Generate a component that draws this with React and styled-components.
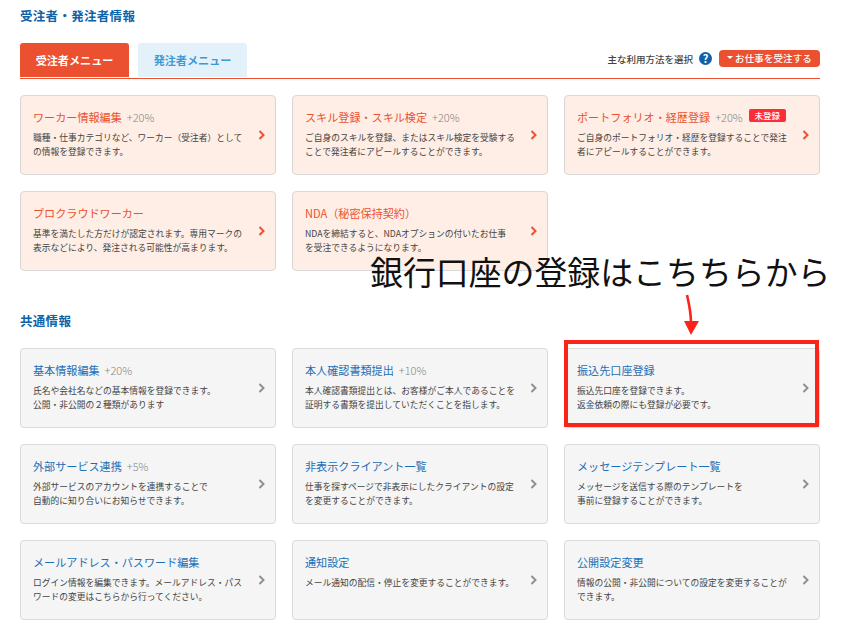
import React from 'react';
import styled, { createGlobalStyle } from 'styled-components';

const GlobalStyle = createGlobalStyle`
  html, body {
    margin: 0;
    padding: 0;
    background: #fff;
    font-family: "Noto Sans CJK JP", "Liberation Sans", sans-serif;
  }
`;

const Page = styled.div`
  position: relative;
  width: 844px;
  height: 641px;
  padding: 7px 24px 0 20px;
  box-sizing: border-box;
  overflow: hidden;
`;

const SectionTitle = styled.h2`
  margin: ${p => p.$top || 0}px 0 0;
  height: 18px;
  font-size: 12.5px;
  line-height: 18px;
  font-weight: 700;
  color: #0f62a8;
  letter-spacing: 0.3px;
`;

const TabBar = styled.div`
  display: flex;
  align-items: flex-start;
  height: 35px;
  margin-top: 18px;
  border-bottom: 1px solid #eb5130;
`;

const Tab = styled.div`
  display: flex;
  align-items: center;
  justify-content: center;
  width: 109px;
  height: 34px;
  margin-right: 9px;
  padding-bottom: 1px;
  box-sizing: border-box;
  border-radius: 3px 3px 0 0;
  font-size: 11.1px;
  font-weight: 700;
  background: ${p => (p.$active ? '#eb5130' : '#e3f1fa')};
  color: ${p => (p.$active ? '#fff' : '#3b9ad6')};
`;

const Chooser = styled.div`
  display: flex;
  align-items: center;
  margin-left: auto;
  height: 34px;
  padding-bottom: 3px;
  box-sizing: border-box;
`;

const ChooserLabel = styled.span`
  font-size: 9.5px;
  font-weight: 500;
  color: #444;
`;

const HelpIcon = styled.span`
  display: flex;
  align-items: center;
  justify-content: center;
  width: 13px;
  height: 13px;
  margin: 0 7px 0 6px;
  border-radius: 50%;
  background: #0f62a8;
  color: #fff;
  font-size: 11px;
  font-weight: 700;
  line-height: 1;
`;

const RoleButton = styled.div`
  display: flex;
  align-items: center;
  justify-content: center;
  gap: 2px;
  width: 101px;
  height: 17px;
  padding-bottom: 2px;
  box-sizing: border-box;
  border-radius: 4px;
  background: #eb5130;
  color: #fff;
  font-size: 9.5px;
  font-weight: 500;
  letter-spacing: 0.1px;
`;

const Caret = styled.i`
  width: 0;
  height: 0;
  border-left: 3px solid transparent;
  border-right: 3px solid transparent;
  border-top: 3px solid #fff;
`;

const CardGrid = styled.div`
  display: grid;
  grid-template-columns: repeat(3, 256px);
  grid-auto-rows: 80px;
  gap: 16px;
  margin-top: ${p => p.$top}px;
`;

const Card = styled.div`
  position: relative;
  box-sizing: border-box;
  padding: 12px 32px 0 12px;
  border: 1px solid #d9d9d9;
  border-radius: 4px;
  background: ${p => (p.$tone === 'worker' ? '#ffeee5' : '#f5f5f5')};
`;

const TitleRow = styled.div`
  display: flex;
  align-items: center;
  height: 18px;
  white-space: nowrap;
`;

const CardTitle = styled.span`
  font-size: 11.1px;
  color: ${p => (p.$tone === 'worker' ? '#eb5130' : '#1a6fb8')};
`;

const Bonus = styled.span`
  margin-left: 5px;
  font-size: 11px;
  font-weight: 300;
  color: #858585;
`;

const Badge = styled.span`
  display: flex;
  align-items: center;
  justify-content: center;
  width: 37px;
  height: 13px;
  margin: -3px 0 0 6px;
  border-radius: 2px;
  background: #fb2d37;
  color: #fff;
  font-size: 8.5px;
  font-weight: 500;
  line-height: 1;
`;

const CardText = styled.p`
  margin: 5px 0 0;
  font-size: 8.75px;
  line-height: 14px;
  color: #444;
  white-space: pre-line;
  width: 226px;
`;

const Chevron = styled.svg`
  position: absolute;
  right: 10px;
  top: 34px;
  width: 7px;
  height: 10px;
  fill: none;
  stroke: ${p => (p.$tone === 'worker' ? '#eb5130' : '#8f8f8f')};
  stroke-width: 2;
`;

const Callout = styled.div`
  position: absolute;
  left: 370px;
  top: 254px;
  font-size: 32.9px;
  line-height: 33px;
  color: #111;
  white-space: nowrap;
`;

const CalloutArrow = styled.svg`
  position: absolute;
  left: 680px;
  top: 292px;
  width: 24px;
  height: 46px;
`;

const Highlight = styled.div`
  position: absolute;
  left: 564px;
  top: 340px;
  width: 255px;
  height: 87px;
  box-sizing: border-box;
  border: 4px solid #fb2418;
`;

const workerCards = [
  { title: 'ワーカー情報編集', bonus: '+20%', text: '職種・仕事カテゴリなど、ワーカー（受注者）として\nの情報を登録できます。' },
  { title: 'スキル登録・スキル検定', bonus: '+20%', text: 'ご自身のスキルを登録、またはスキル検定を受験する\nことで発注者にアピールすることができます。' },
  { title: 'ポートフォリオ・経歴登録', bonus: '+20%', badge: '未登録', text: 'ご自身のポートフォリオ・経歴を登録することで発注\n者にアピールすることができます。' },
  { title: 'プロクラウドワーカー', text: '基準を満たした方だけが認定されます。専用マークの\n表示などにより、発注される可能性が高まります。' },
  { title: 'NDA（秘密保持契約）', text: 'NDAを締結すると、NDAオプションの付いたお仕事\nを受注できるようになります。' }
];

const commonCards = [
  { title: '基本情報編集', bonus: '+20%', text: '氏名や会社名などの基本情報を登録できます。\n公開・非公開の２種類があります' },
  { title: '本人確認書類提出', bonus: '+10%', text: '本人確認書類提出とは、お客様がご本人であることを\n証明する書類を提出していただくことを指します。' },
  { title: '振込先口座登録', text: '振込先口座を登録できます。\n返金依頼の際にも登録が必要です。' },
  { title: '外部サービス連携', bonus: '+5%', text: '外部サービスのアカウントを連携することで\n自動的に知り合いにお知らせできます。' },
  { title: '非表示クライアント一覧', text: '仕事を探すページで非表示にしたクライアントの設定\nを変更することができます。' },
  { title: 'メッセージテンプレート一覧', text: 'メッセージを送信する際のテンプレートを\n事前に登録することができます。' },
  { title: 'メールアドレス・パスワード編集', text: 'ログイン情報を編集できます。メールアドレス・パス\nワードの変更はこちらから行ってください。' },
  { title: '通知設定', text: 'メール通知の配信・停止を変更することができます。' },
  { title: '公開設定変更', text: '情報の公開・非公開についての設定を変更することが\nできます。' }
];

const MenuCard = ({ tone, title, bonus, badge, text }) => (
  <Card $tone={tone}>
    <TitleRow>
      <CardTitle $tone={tone}>{title}</CardTitle>
      {bonus && <Bonus>{bonus}</Bonus>}
      {badge && <Badge>{badge}</Badge>}
    </TitleRow>
    <CardText>{text}</CardText>
    <Chevron $tone={tone} viewBox="0 0 7 10">
      <path d="M1.5 1 L5.5 5 L1.5 9" />
    </Chevron>
  </Card>
);

const App = () => (
  <Page>
    <GlobalStyle />
    <SectionTitle>受注者・発注者情報</SectionTitle>
    <TabBar>
      <Tab $active>受注者メニュー</Tab>
      <Tab>発注者メニュー</Tab>
      <Chooser>
        <ChooserLabel>主な利用方法を選択</ChooserLabel>
        <HelpIcon>?</HelpIcon>
        <RoleButton><Caret />お仕事を受注する</RoleButton>
      </Chooser>
    </TabBar>
    <CardGrid $top={16}>
      {workerCards.map(card => <MenuCard key={card.title} tone="worker" {...card} />)}
    </CardGrid>
    <SectionTitle $top={41}>共通情報</SectionTitle>
    <CardGrid $top={18}>
      {commonCards.map(card => <MenuCard key={card.title} tone="common" {...card} />)}
    </CardGrid>
    <Callout>銀行口座の登録はこちちらから</Callout>
    <CalloutArrow viewBox="0 0 24 46">
      <path d="M7 3 C9 12 11 20 11 31" fill="none" stroke="#fb2418" strokeWidth="2.6" />
      <path d="M4 29 L19 29 L11 43 Z" fill="#fb2418" />
    </CalloutArrow>
    <Highlight />
  </Page>
);

export default App;
